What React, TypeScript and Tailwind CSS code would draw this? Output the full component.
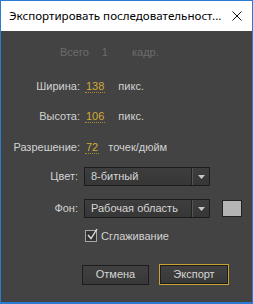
import React from "react";

const F = { fontFamily: '"Liberation Sans", Arial, sans-serif' };

function Dropdown({ label }: { label: string }) {
  return (
    <div className="flex h-[19px] w-[126px] items-stretch border border-[#1c1c1c] bg-gradient-to-b from-[#3e3e3e] to-[#363636]">
      <div className="flex flex-1 items-center pl-[6px] text-[#d6d6d6]">{label}</div>
      <div className="w-px bg-[#222]" />
      <div className="w-px bg-[#555]" />
      <div className="flex w-[16px] items-center justify-center">
        <svg width="7" height="4" viewBox="0 0 7 4">
          <polygon points="0,0 7,0 3.5,4" fill="#c8c8c8" />
        </svg>
      </div>
    </div>
  );
}

function Value({ v }: { v: string }) {
  return (
    <span className="border-b border-dotted border-[#b08a2a] px-px leading-[13px] text-[#d4a838]">{v}</span>
  );
}

export default function App() {
  return (
    <div className="flex h-[304px] w-[253px] flex-col border border-b-2 border-[#2b7bd3] bg-[#434343] text-[11px]" style={F}>
      <div className="flex h-[30px] shrink-0 items-center bg-white">
        <div className="pl-[8px] text-[11.6px] text-black" style={{ fontFamily: '"Noto Sans", "Open Sans", sans-serif' }}>
          Экспортировать последовательност...
        </div>
        <svg className="ml-auto mr-[10px]" width="10" height="10" viewBox="0 0 10 10">
          <path d="M0.5 0.5 L9.5 9.5 M9.5 0.5 L0.5 9.5" stroke="#111" strokeWidth="1" />
        </svg>
      </div>
      <div className="flex flex-1 flex-col text-[#d2d2d2]">
        <div className="mt-[13px] flex h-[16px] items-center text-[#6c6c6c]">
          <span className="ml-[59px]">Всего</span>
          <span className="ml-[13px]">1</span>
          <span className="ml-[24px]">кадр.</span>
        </div>
        <div className="mt-[18px] flex h-[16px] items-center">
          <span className="w-[79px] text-right">Ширина:</span>
          <span className="ml-[5px]"><Value v="138" /></span>
          <span className="ml-[13px]">пикс.</span>
        </div>
        <div className="mt-[14px] flex h-[16px] items-center">
          <span className="w-[79px] text-right">Высота:</span>
          <span className="ml-[5px]"><Value v="106" /></span>
          <span className="ml-[13px]">пикс.</span>
        </div>
        <div className="mt-[15px] flex h-[16px] items-center">
          <span className="w-[79px] text-right">Разрешение:</span>
          <span className="ml-[5px]"><Value v="72" /></span>
          <span className="ml-[9px]">точек/дюйм</span>
        </div>
        <div className="mt-[12px] flex items-center">
          <span className="w-[77px] text-right">Цвет:</span>
          <span className="ml-[6px]"><Dropdown label="8-битный" /></span>
        </div>
        <div className="mt-[13px] flex items-center">
          <span className="w-[77px] text-right">Фон:</span>
          <span className="ml-[6px]"><Dropdown label="Рабочая область" /></span>
          <div className="ml-[12px] h-[17px] w-[20px] border border-[#222] bg-[#b4b4b4]" />
        </div>
        <div className="mt-[10px] flex h-[16px] items-center">
          <div className="relative ml-[84px] h-[12px] w-[12px] border border-[#a8a8a8] bg-[#333]">
            <svg className="absolute left-[0px] top-[-3px]" width="13" height="13" viewBox="0 0 13 13">
              <path d="M2 7 L5 10.5 L11 1" stroke="#dcdcdc" strokeWidth="1.4" fill="none" />
            </svg>
          </div>
          <span className="ml-[4px]">Сглаживание</span>
        </div>
        <div className="mt-[20px] flex items-center">
          <div className="ml-[81px] flex h-[20px] w-[67px] items-center justify-center border border-[#1c1c1c] bg-gradient-to-b from-[#414141] to-[#383838] text-[#d6d6d6]">
            Отмена
          </div>
          <div className="ml-[10px] flex h-[21px] w-[70px] items-center justify-center border border-[#c9a032] bg-[#1c1c1c] p-px">
            <div className="flex h-full w-full items-center justify-center bg-gradient-to-b from-[#414141] to-[#383838] text-[#d6d6d6]">
              Экспорт
            </div>
          </div>
        </div>
      </div>
    </div>
  );
}
